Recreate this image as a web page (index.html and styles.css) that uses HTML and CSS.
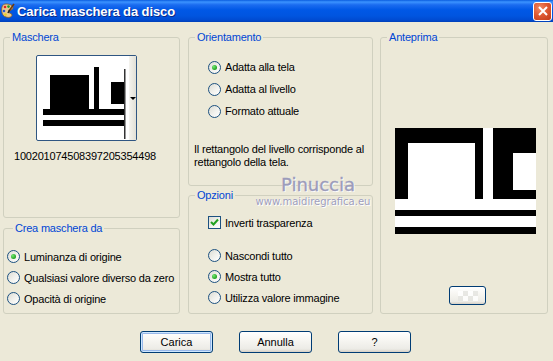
FILE: index.html
```html
<!DOCTYPE html>
<html lang="it">
<head>
  <meta charset="UTF-8" />
  <title>Carica maschera da disco</title>
  <link rel="stylesheet" href="styles.css">
</head>
<body>
  <div class="titlebar">
    <svg class="app-icon" width="15" height="16" viewBox="0 0 15 16">
      <path d="M2 4 C1 8 2 13 6 14 C9 15 12 14 12 12 C12 10 9 11 9 9 C9 7 13 7 13 5 C13 2 9 1 6 1 C4 1 2.5 2 2 4 Z" fill="#e9c98e" stroke="#8a5a22" stroke-width="0.8"/>
      <circle cx="5" cy="4" r="1.3" fill="#d22"/>
      <circle cx="8.5" cy="3.6" r="1.3" fill="#1a9a2a"/>
      <circle cx="4" cy="8" r="1.3" fill="#2456d8"/>
      <circle cx="5.5" cy="11.5" r="1.3" fill="#e8d020"/>
      <path d="M14 1 L9 8" stroke="#6b3b12" stroke-width="1.6"/>
      <path d="M9.5 7 L8 10" stroke="#222" stroke-width="1.6"/>
    </svg>
    <span class="title">Carica maschera da disco</span>
    <button class="close">
      <svg width="10" height="10" viewBox="0 0 10 10">
        <path d="M1 1 L9 9 M9 1 L1 9" stroke="#fff" stroke-width="2"/>
      </svg>
    </button>
  </div>

  <div class="client">
    <div class="columns">
      <div class="col col-left">
        <fieldset class="group g-mask">
          <legend>Maschera</legend>
          <div class="mask-pick">
            <svg class="mask-thumb" width="92" height="84" viewBox="0 0 92 84">
              <rect x="13" y="19" width="39" height="34" fill="#000"/>
              <rect x="57" y="11" width="5" height="42" fill="#000"/>
              <rect x="74" y="26" width="13" height="22" fill="#000"/>
              <rect x="6" y="53" width="81" height="6" fill="#000"/>
              <rect x="6" y="64" width="81" height="6" fill="#000"/>
              <rect x="87" y="13" width="1.5" height="70" fill="#333"/>
            </svg>
            <div class="mask-drop"><span class="arrow"></span></div>
          </div>
          <div class="mask-name">100201074508397205354498</div>
        </fieldset>

        <fieldset class="group g-source">
          <legend>Crea maschera da</legend>
          <div class="opt"><span class="radio on"></span>Luminanza di origine</div>
          <div class="opt"><span class="radio"></span>Qualsiasi valore diverso da zero</div>
          <div class="opt"><span class="radio"></span>Opacità di origine</div>
        </fieldset>
      </div>

      <div class="col col-mid">
        <fieldset class="group g-orient">
          <legend>Orientamento</legend>
          <div class="opts">
            <div class="opt tall"><span class="radio on"></span>Adatta alla tela</div>
            <div class="opt tall"><span class="radio"></span>Adatta al livello</div>
            <div class="opt tall"><span class="radio"></span>Formato attuale</div>
          </div>
          <p class="desc">Il rettangolo del livello corrisponde al rettangolo della tela.</p>
        </fieldset>

        <fieldset class="group g-opts">
          <legend>Opzioni</legend>
          <div class="opts">
            <div class="opt"><span class="check"><svg width="9" height="9" viewBox="0 0 9 9"><path d="M1 4 L3.5 6.5 L8 1.5" fill="none" stroke="#21a121" stroke-width="2"/></svg></span>Inverti trasparenza</div>
            <div class="radios">
              <div class="opt"><span class="radio"></span>Nascondi tutto</div>
              <div class="opt"><span class="radio on"></span>Mostra tutto</div>
              <div class="opt"><span class="radio"></span>Utilizza valore immagine</div>
            </div>
          </div>
        </fieldset>
      </div>

      <div class="col col-right">
        <fieldset class="group g-preview">
          <legend>Anteprima</legend>
          <svg class="preview" width="141" height="106" viewBox="0 0 141 106">
            <rect width="141" height="106" fill="#000"/>
            <rect x="13" y="15" width="67" height="56" fill="#fff"/>
            <rect x="88" y="0" width="10" height="71" fill="#fff"/>
            <rect x="118" y="25" width="23" height="37" fill="#fff"/>
            <rect x="0" y="71" width="141" height="11" fill="#fff"/>
            <rect x="0" y="88" width="141" height="11" fill="#fff"/>
          </svg>
          <button class="btn small"><span class="checker"></span></button>
        </fieldset>
      </div>
    </div>

    <div class="actions">
      <button class="btn default">Carica</button>
      <button class="btn">Annulla</button>
      <button class="btn">?</button>
    </div>

    <div class="watermark">
      <div class="wm-name">Pinuccia</div>
      <div class="wm-url">www.maidiregrafica.eu</div>
    </div>
  </div>
</body>
</html>
```

FILE: styles.css
```css
* {
  box-sizing: border-box;
}
body {
  margin: 0;
  background: #ece9d8;
  font-family: 'Liberation Sans', Arial, sans-serif;
  font-size: 11px;
  letter-spacing: -0.2px;
  color: #000;
  overflow: hidden;
}

/* TITLE BAR */
.titlebar {
  height: 22px;
  display: flex; align-items: center;
  background: linear-gradient(#0a5ddf 0%, #3b93ff 9%, #1b6cf0 22%, #0058e6 45%, #0055e0 72%, #004bd2 90%, #003fb8 100%);
}
.app-icon { flex: none; }
.title {
  margin-left: 2px;
  color: #fff; font-weight: bold; font-size: 13px;
  letter-spacing: -0.1px;
  text-shadow: 1px 1px 0 #0c2a8a;
}
.close {
  margin-left: auto; margin-right: 1px;
  width: 19px; height: 19px; padding: 0;
  border: 1px solid #fff; border-radius: 3px;
  background: radial-gradient(circle at 35% 30%, #f08a66 0%, #de5a33 45%, #c23a18 100%);
  display: flex; align-items: center; justify-content: center;
}

/* CLIENT */
.client {
  position: relative;
  padding: 9px 0 0 3px;
}
.columns { display: flex; }
.col { display: flex; flex-direction: column; }
.col-left { width: 177px; }
.col-mid { width: 185px; margin-left: 8px; }
.col-right { width: 168px; margin-left: 7px; }

.group {
  margin: 0; padding: 0; min-width: 0;
  border: 1px solid #d0d0bf; border-radius: 3px;
}
.group legend {
  margin-left: 6px; padding: 0 2px;
  color: #0046d5; line-height: 13px;
}
.g-mask { height: 187px; }
.g-source { height: 92px; margin-top: 4px; padding: 11px 0 0 3px; }
.g-orient { height: 155px; }
.g-opts { height: 125px; margin-top: 3px; }
.g-preview { height: 283px; }

/* MASK PICKER */
.mask-pick {
  margin: 11px 0 0 32px;
  width: 101px; height: 86px;
  border: 1px solid #2f5682; border-radius: 2px;
  background: #fff;
  display: flex;
}
.mask-thumb { flex: none; }
.mask-drop {
  flex: 1;
  background: linear-gradient(90deg, #f4f3ee, #e2e0d6);
  display: flex; align-items: center; justify-content: center;
}
.arrow {
  width: 0; height: 0;
  border-left: 3px solid transparent; border-right: 3px solid transparent;
  border-top: 3px solid #000;
}
.mask-name {
  margin-top: 9px; padding-left: 10px;
  line-height: 13px;
}

/* OPTIONS */
.opt {
  height: 21px;
  display: flex; align-items: center; gap: 4px;
  white-space: nowrap;
}
.opt.tall { height: 22px; }
.opts { padding: 12px 0 0 19px; }
.g-opts .opts { padding-top: 10px; }
.radios { margin-top: 12px; }

.radio {
  width: 13px; height: 13px; flex: none;
  border: 1px solid #1c5180; border-radius: 50%;
  background: linear-gradient(135deg, #dcdcd4 0%, #f2f2ee 55%, #fff 100%);
  display: flex; align-items: center; justify-content: center;
}
.radio.on::after {
  content: '';
  width: 5px; height: 5px; border-radius: 50%;
  background: radial-gradient(circle at 35% 35%, #72e872, #21a121 70%);
}
.check {
  width: 13px; height: 13px; flex: none;
  border: 1px solid #1c5180;
  background: linear-gradient(135deg, #dcdcd4 0%, #f2f2ee 55%, #fff 100%);
  display: flex; align-items: center; justify-content: center;
}

.desc {
  margin: 21px 0 0 5px;
  line-height: 13px;
}

/* PREVIEW */
.preview { display: block; margin: 84px 0 0 14px; }

/* BUTTONS */
.btn {
  font-family: inherit; font-size: 11px; color: #000;
  width: 73px; height: 22px; padding: 0;
  border: 1px solid #003c74; border-radius: 3px;
  background: linear-gradient(#ffffff 0%, #f7f6f2 40%, #ecebe6 85%, #d6d0c5 100%);
}
.btn.default {
  box-shadow: inset 0 0 0 1px #cee7ff, inset 0 0 0 2px #98b8ea;
}
.btn.small {
  display: flex; align-items: center; justify-content: center;
  width: 37px; height: 19px; margin: 52px 0 0 68px;
}
.checker {
  width: 20px; height: 10px;
  background: conic-gradient(#e4e4e0 25%, #fff 0 50%, #e4e4e0 0 75%, #fff 0) 0 0 / 10px 10px;
  opacity: .8;
}
.actions {
  display: flex; gap: 26px;
  margin-top: 17px; padding-left: 137px;
}

/* WATERMARK */
.watermark {
  position: absolute; left: 250px; top: 152px;
  width: 126px; text-align: center;
  color: #9c9cba;
  letter-spacing: 0;
  text-shadow: 0 0 1px #fff, 1px 1px 0 #fff;
}
.wm-name {
  font-family: 'DejaVu Sans', sans-serif;
  font-size: 18px; line-height: 22px;
  -webkit-text-stroke: 0.4px #9c9cba;
  padding-left: 10px;
}
.wm-url {
  font-family: 'DejaVu Sans', sans-serif;
  font-size: 10px; line-height: 12px;
}
```
